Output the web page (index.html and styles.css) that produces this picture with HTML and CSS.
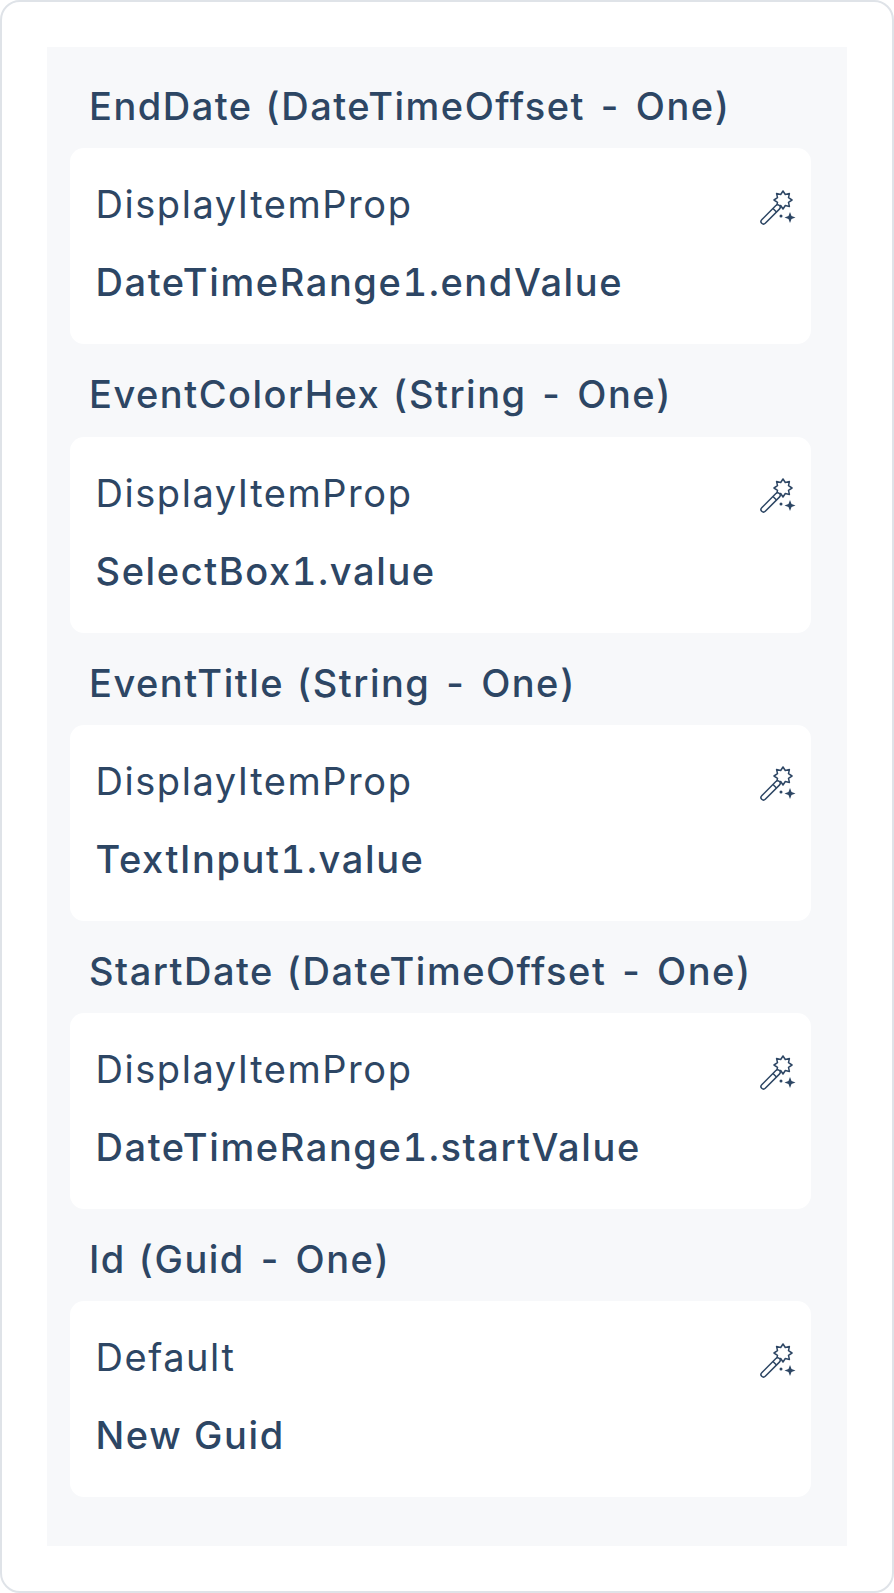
FILE: index.html
```html
<!DOCTYPE html>
<html lang="en">
  <head>
    <meta charset="UTF-8" />
    <title>Inputs</title>
    <link rel="stylesheet" href="styles.css">
  </head>
  <body>
    <svg class="defs" width="0" height="0">
      <symbol id="wand" viewBox="0 0 36 36">
        <path d="M32 10l-3.500 2.300.9 4.100-4.100-.9L23 19l-2.300-3.500-4.100.9.9-4.100L14 10l3.500-2.300-.9-4.100 4.100.9L23 1l2.300 3.500 4.100-.9-.9 4.100Z" fill="none" stroke="currentColor" stroke-width="1.500" stroke-linejoin="round"/>
        <rect x="1" y="29" width="25" height="5" rx="2.500" transform="rotate(-45 3.500 31.500)" fill="#fff" stroke="currentColor" stroke-width="1.500"/>
        <path d="m13 18.500 3.500 3.500" fill="none" stroke="currentColor" stroke-width="1.500"/>
        <path d="m30 22 1.500 4 4 1.500-4 1.500-1.500 4-1.500-4-4-1.500 4-1.500Z" fill="currentColor"/>
        <circle cx="21" cy="26" r="1.500" fill="currentColor"/>
      </symbol>
    </svg>
    <div class="frame">
      <div class="panel">
        <div class="prop">
          <div class="prop-title">EndDate (DateTimeOffset - One)</div>
          <div class="card">
            <div class="card-head">
              <span class="card-type">DisplayItemProp</span>
              <svg class="wand"><use href="#wand"/></svg>
            </div>
            <div class="card-value">DateTimeRange1.endValue</div>
          </div>
        </div>
        <div class="prop">
          <div class="prop-title">EventColorHex (String - One)</div>
          <div class="card">
            <div class="card-head">
              <span class="card-type">DisplayItemProp</span>
              <svg class="wand"><use href="#wand"/></svg>
            </div>
            <div class="card-value">SelectBox1.value</div>
          </div>
        </div>
        <div class="prop">
          <div class="prop-title">EventTitle (String - One)</div>
          <div class="card">
            <div class="card-head">
              <span class="card-type">DisplayItemProp</span>
              <svg class="wand"><use href="#wand"/></svg>
            </div>
            <div class="card-value">TextInput1.value</div>
          </div>
        </div>
        <div class="prop">
          <div class="prop-title">StartDate (DateTimeOffset - One)</div>
          <div class="card">
            <div class="card-head">
              <span class="card-type">DisplayItemProp</span>
              <svg class="wand"><use href="#wand"/></svg>
            </div>
            <div class="card-value">DateTimeRange1.startValue</div>
          </div>
        </div>
        <div class="prop">
          <div class="prop-title">Id (Guid - One)</div>
          <div class="card">
            <div class="card-head">
              <span class="card-type">Default</span>
              <svg class="wand"><use href="#wand"/></svg>
            </div>
            <div class="card-value">New Guid</div>
          </div>
        </div>
      </div>
    </div>
  </body>
</html>
```

FILE: styles.css
```css
* {
  margin: 0;
  padding: 0;
  box-sizing: border-box;
}
body {
  width: 894px;
  height: 1593px;
  background-color: #fff;
  font-family: Inter, "Liberation Sans", sans-serif;
  font-variant-numeric: tabular-nums;
  color: #2d4664;
}
.defs {
  display: block;
  height: 0;
}
.frame {
  width: 894px;
  height: 1593px;
  border: 2px solid #dfe3e8;
  border-radius: 20px;
  padding: 45px;
}
.panel {
  width: 800px;
  height: 1499px;
  background-color: #f7f8fa;
  padding: 37px 36px 0 23px;
}
.prop {
  margin-bottom: 28px;
}
.prop-title {
  font-size: 38px;
  line-height: 44px;
  font-weight: 500;
  letter-spacing: 1.500px;
  word-spacing: 0.600px;
  padding-left: 19px;
  margin-bottom: 20.300px;
}
.card {
  height: 196px;
  background-color: #fff;
  border-radius: 14px;
  padding: 31px 15px 0 25.500px;
}
.card-head {
  display: flex;
  justify-content: space-between;
  align-items: center;
  height: 50px;
}
.card-type {
  font-size: 38px;
  font-weight: 400;
  letter-spacing: 1.550px;
}
.wand {
  width: 36px;
  height: 36px;
  margin-top: 7px;
}
.card-value {
  font-size: 38px;
  font-weight: 500;
  letter-spacing: 1.600px;
  line-height: 44px;
  margin-top: 31px;
}
```
